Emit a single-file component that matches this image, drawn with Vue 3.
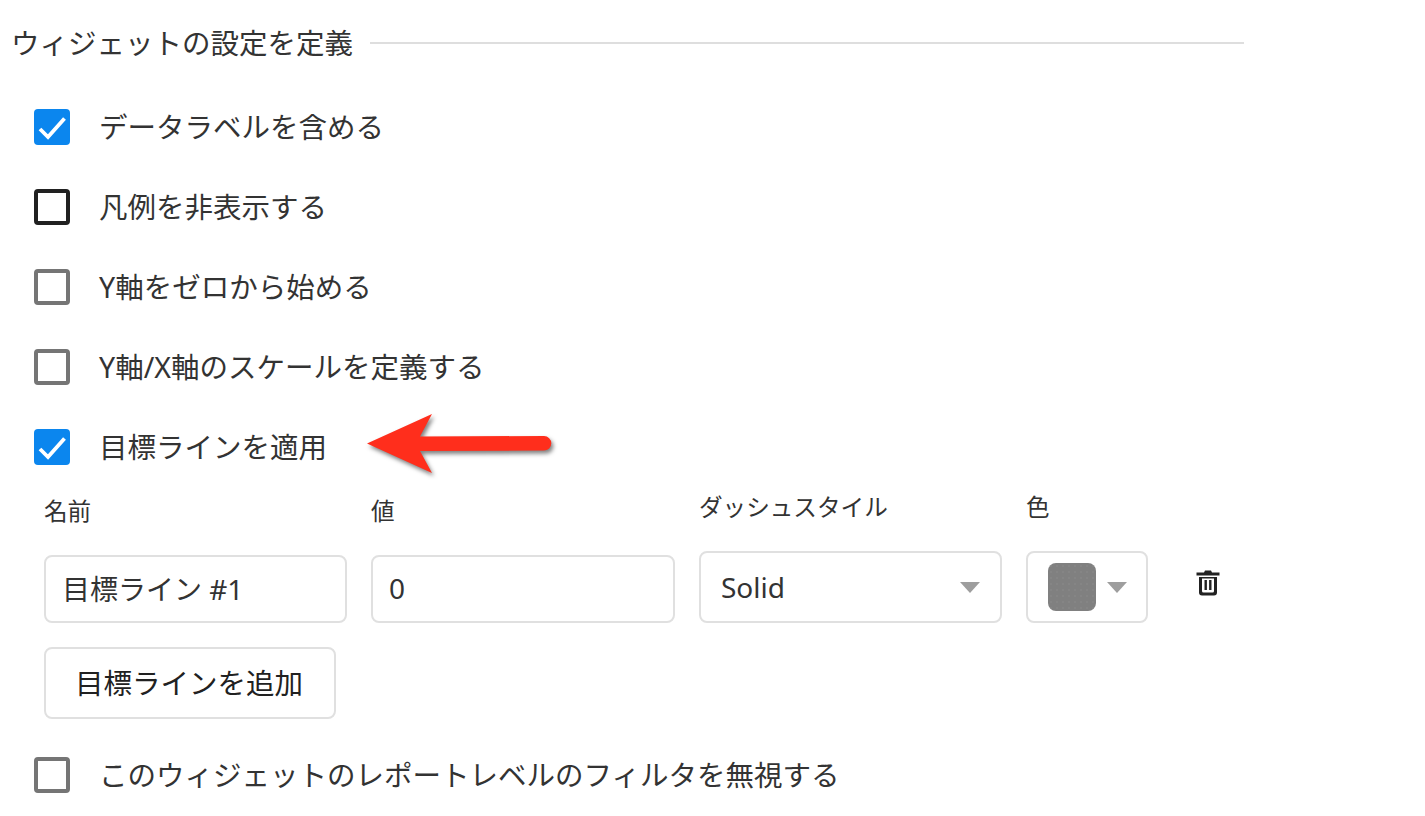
<template>
  <div class="page">
    <div class="section-title">
      <span>ウィジェットの設定を定義</span>
      <div class="title-line"></div>
    </div>

    <div class="check-row" v-for="item in topChecks" :key="item.label">
      <span class="box" :class="{ checked: item.checked, focused: item.focused }">
        <svg v-if="item.checked" viewBox="0 0 36 36" width="36" height="36">
          <path d="M6 20 L14 28 L30.500 9.500" fill="none" stroke="#fff" stroke-width="3.800" />
        </svg>
      </span>
      <span class="check-label">{{ item.label }}</span>
    </div>

    <div class="check-row target-row">
      <span class="box checked">
        <svg viewBox="0 0 36 36" width="36" height="36">
          <path d="M6 20 L14 28 L30.500 9.500" fill="none" stroke="#fff" stroke-width="3.800" />
        </svg>
      </span>
      <span class="check-label">目標ラインを適用</span>
      <svg class="arrow" viewBox="0 0 200 70" width="200" height="70">
        <path
          d="M1 33.500 L66 4 L54 26.500 L178 26 A7.300 7.300 0 0 1 178 40.600 L54 41 L66 63 Z"
          fill="#ff2e1c"
        />
      </svg>
    </div>

    <div class="fields">
      <div class="field name-field">
        <div class="field-label">名前</div>
        <div class="control text-control">目標ライン #1</div>
      </div>
      <div class="field value-field">
        <div class="field-label">値</div>
        <div class="control text-control">0</div>
      </div>
      <div class="field dash-field">
        <div class="field-label">ダッシュスタイル</div>
        <div class="control select-control">
          <span>Solid</span>
          <span class="caret"></span>
        </div>
      </div>
      <div class="field color-field">
        <div class="field-label">色</div>
        <div class="control color-control">
          <span class="swatch"></span>
          <span class="caret"></span>
        </div>
      </div>
      <svg class="trash" viewBox="0 0 24 28" width="24" height="28">
        <path
          d="M9 1.500 H15 L16 3.500 H23.500 V6.500 H0.500 V3.500 H8 Z"
          fill="#222"
        />
        <path
          d="M3 8 H21 V23.500 A3 3 0 0 1 18 26.500 H6 A3 3 0 0 1 3 23.500 Z M6 9.500 V22 A1.500 1.500 0 0 0 7.500 23.500 H16.500 A1.500 1.500 0 0 0 18 22 V9.500 Z"
          fill="#222"
          fill-rule="evenodd"
        />
        <rect x="8.500" y="11" width="2.400" height="10" fill="#222" />
        <rect x="13.100" y="11" width="2.400" height="10" fill="#222" />
      </svg>
    </div>

    <div class="add-button">目標ラインを追加</div>

    <div class="check-row last-row">
      <span class="box"></span>
      <span class="check-label">このウィジェットのレポートレベルのフィルタを無視する</span>
    </div>
  </div>
</template>

<script setup>
const topChecks = [
  { label: "データラベルを含める", checked: true },
  { label: "凡例を非表示する", focused: true },
  { label: "Y軸をゼロから始める" },
  { label: "Y軸/X軸のスケールを定義する" },
];
</script>

<style scoped>
.page {
  width: 1425px;
  height: 816px;
  box-sizing: border-box;
  padding: 20px 0 0 13px;
  overflow: hidden;
  background: #fff;
  color: #333;
  font-family: "Noto Sans", "Noto Sans CJK JP", sans-serif;
  font-size: 28.5px;
}

/* Title */
.section-title {
  display: flex;
  align-items: center;
  width: 1231px;
  height: 46px;
  margin-bottom: 43px;
  line-height: 46px;
}
.section-title span {
  margin-left: -2px;
  margin-right: 17px;
}
.title-line {
  flex: 1;
  height: 2px;
  background: #dedede;
}

/* Checkbox rows */
.check-row {
  display: flex;
  align-items: center;
  height: 36px;
  margin: 0 0 44px 21px;
  gap: 29px;
}
.box {
  flex: none;
  width: 36px;
  height: 36px;
  box-sizing: border-box;
  border: 4px solid #757575;
  border-radius: 4px;
}
.box.focused {
  border-color: #212121;
}
.box.checked {
  border: none;
  background: #0b86ee;
}
.box svg {
  display: block;
}
.check-label {
  white-space: nowrap;
  line-height: 40px;
}

.target-row {
  position: relative;
  margin-bottom: 0;
}
.arrow {
  position: absolute;
  left: 332px;
  top: -19px;
  filter: drop-shadow(2px 3px 2px rgba(0, 0, 0, 0.5));
  overflow: visible;
}

/* Target line fields */
.fields {
  display: flex;
  align-items: flex-end;
  gap: 24px;
  margin: 26px 0 24px 31px;
}
.field-label {
  font-size: 23.600px;
  line-height: 32px;
  margin-bottom: 28px;
  white-space: nowrap;
}
.control {
  box-sizing: border-box;
  display: flex;
  align-items: center;
  border: 2px solid #e0e0e0;
  border-radius: 8px;
  color: #333;
}
.name-field,
.dash-field {
  width: 303px;
}
.value-field {
  width: 304px;
}
.text-control {
  height: 68px;
  padding: 0 16px 2px;
  font-size: 28px;
}
.select-control {
  height: 72px;
  padding: 0 20px 0 20px;
  justify-content: space-between;
  font-size: 28px;
}
.color-field {
  width: 122px;
}
.color-control {
  height: 72px;
  padding: 0 19px 0 20px;
  justify-content: space-between;
}
.swatch {
  width: 48px;
  height: 48px;
  border-radius: 8px;
  background-color: #808080;
  background-image: radial-gradient(rgba(255, 255, 255, 0.04) 1px, transparent 1px);
  background-size: 6px 6px;
}
.caret {
  width: 0;
  height: 0;
  border-left: 10px solid transparent;
  border-right: 10px solid transparent;
  border-top: 11px solid #9e9e9e;
}
.trash {
  flex: none;
  margin: 0 0 26px 24px;
}

.add-button {
  box-sizing: border-box;
  display: flex;
  align-items: center;
  justify-content: center;
  width: 292px;
  height: 72px;
  margin: 0 0 38px 31px;
  padding: 0 2px 4px 0;
  border: 2px solid #e0e0e0;
  border-radius: 8px;
  color: #212121;
  font-size: 28.500px;
}
.last-row {
  margin-bottom: 0;
}
</style>

<style>
html,
body {
  margin: 0;
  background: #fff;
}
</style>
